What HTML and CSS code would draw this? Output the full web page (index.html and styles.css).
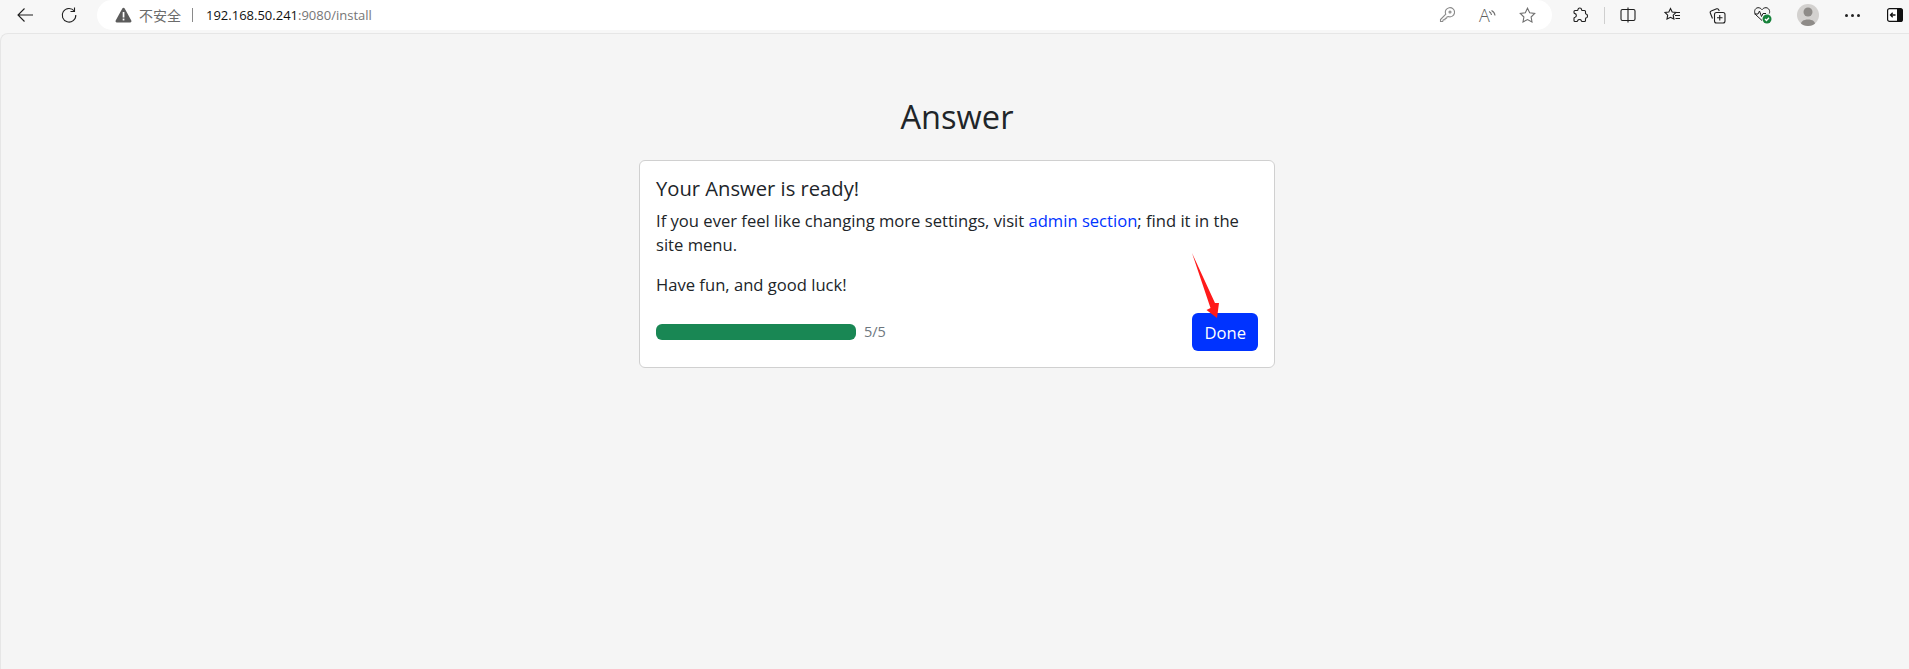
FILE: index.html
```html
<!DOCTYPE html>
<html lang="en">
<head>
    <meta charset="UTF-8">
    <meta name="viewport" content="width=device-width, initial-scale=1.0">
    <title>Answer</title>
    <link rel="stylesheet" href="styles.css">
</head>
<body>
    <div class="toolbar">
        <div class="nav-buttons">
            <span class="tool-btn">
                <svg class="icon" width="18" height="18" viewBox="0 0 18 18"><path d="M17 9H2M8.500 2.500 2 9l6.500 6.500"/></svg>
            </span>
            <span class="tool-btn">
                <svg class="icon" width="18" height="18" viewBox="0 0 18 18"><path d="M14.500 1.500V5.500H10.500M14.300 5A6.800 6.800 0 1 0 15.800 9"/></svg>
            </span>
        </div>

        <div class="address-bar">
            <svg class="warn-icon" width="17" height="16" viewBox="0 0 17 16"><path d="M8.500.8c.5 0 .9.3 1.200.8l6.600 12c.5.900-.1 1.800-1.100 1.800H1.800c-1 0-1.600-.9-1.100-1.800l6.600-12c.3-.5.700-.8 1.200-.8z"/><rect class="warn-mark" x="7.700" y="5" width="1.700" height="5.500"/><rect class="warn-mark" x="7.700" y="11.600" width="1.700" height="1.800"/></svg>
            <span class="not-secure">不安全</span>
            <span class="address-sep"></span>
            <span class="url"><span class="url-host">192.168.50.241</span>:9080/install</span>
            <div class="address-actions">
                <span class="address-btn">
                    <svg class="icon icon-light" width="16" height="16" viewBox="0 0 16 16"><path d="M1.500 14.500v-2l5.300-5.300a4.600 4.600 0 1 1 2.500 2.300l-1.300.4-.4 1.300H6.300l-.4 1.500H4.300l-.6 1.800z"/><circle cx="11" cy="5" r="1"/></svg>
                </span>
                <span class="address-btn">
                    <span class="read-a">A</span>
                    <svg class="icon icon-grey read-waves" width="8" height="10" viewBox="0 0 8 10"><path d="M1 1.500c1.500 .7 2.300 1.800 2.500 3.500M3.500 .5c2 1 3.300 2.600 3.500 5"/></svg>
                </span>
                <span class="address-btn">
                    <svg class="icon icon-grey" width="17" height="17" viewBox="0 0 17 17"><path d="M8.500 1.200l2.200 4.600 5 .7-3.600 3.500.9 5-4.500-2.400L4 15l.9-5L1.300 6.500l5-.7z"/></svg>
                </span>
            </div>
        </div>

        <div class="tool-group">
            <span class="tool-btn">
                <svg class="icon" width="16" height="16" viewBox="0 0 16 16"><path d="M6 2.500c0-2 3.500-2 3.500 0 0 .7 .5 1 1 1h2c.7 0 1 .4 1 1v1.800c0 .6 .4 .9 1 .9 1.300 .3 1.300 3.300 0 3.600-.6 0-1 .3-1 .9v1.800c0 .6-.3 1-1 1h-2.200c-.6 0-.9-.3-1-.9-.3-1.400-3.300-1.400-3.600 0-.1 .6-.4 .9-1 .9H3c-.6 0-1-.4-1-1v-2.300c0-.6 .4-1 1-1 1.800-.3 1.800-3.300 0-3.600-.6 0-1-.4-1-1V4.500c0-.6 .4-1 1-1h2c.6 0 1-.3 1-1z"/></svg>
            </span>
            <span class="tool-sep"></span>
            <span class="tool-btn">
                <svg class="icon" width="16" height="16" viewBox="0 0 16 16"><rect x="1" y="2.500" width="14" height="11" rx="1.500"/><path d="M8 .5v15"/></svg>
            </span>
            <span class="tool-btn tool-btn-wide">
                <svg class="icon" width="17" height="17" viewBox="0 0 17 17"><path d="M6.500 1.500 8.200 5l3.800.5-2.800 2.700.7 3.900-3.400-1.800L3 12.100l.7-3.900L1 5.500 4.800 5zM11 8.500h5M11 5.500h5M11.500 11.500H16"/></svg>
            </span>
            <span class="tool-btn tool-btn-wide">
                <svg class="icon" width="17" height="17" viewBox="0 0 17 17"><path d="M3.500 11.500 1.300 6a1.500 1.500 0 0 1 .9-2l5.500-2.200a1.500 1.500 0 0 1 1.800 .7l.8 1.500"/><rect x="5.500" y="5.500" width="10.500" height="10.500" rx="2"/><path d="M10.750 8v5.500M8 10.750h5.500"/></svg>
            </span>
            <span class="tool-btn tool-btn-wide">
                <svg class="health-icon" width="20" height="20" viewBox="0 0 20 20">
                    <path class="health-line" d="M9 15.500 3 10C.5 7.500 1.500 3 5 2.700c1.700-.1 3 .8 4 2 1-1.200 2.300-2.100 4-2 3 .2 4.300 3.300 3.300 5.800M1.500 9H5l1.500-3 2 5.500L10 8.500h3"/>
                    <circle class="health-badge" cx="14" cy="14" r="4.500"/>
                    <path class="health-check" d="M12 14l1.500 1.500 2.500-2.700"/>
                </svg>
            </span>
            <span class="tool-btn tool-btn-wide">
                <span class="avatar">
                    <svg width="22" height="22" viewBox="0 0 22 22"><circle cx="11" cy="8" r="4.500"/><path d="M3.500 22c0-4.500 3-6.500 7.500-6.500s7.500 2 7.500 6.500z"/></svg>
                </span>
            </span>
            <span class="tool-btn tool-btn-wide">
                <span class="dots"><i></i><i></i><i></i></span>
            </span>
            <span class="tool-btn tool-btn-last">
                <svg width="16" height="14" viewBox="0 0 16 14"><rect class="side-frame" x=".6" y=".6" width="14.800" height="12.800" rx="2"/><path class="side-fill" d="M10 .6h3.500a2 2 0 0 1 2 2v8.800a2 2 0 0 1-2 2H10z"/><path class="side-arrow" d="M8.500 7H3.500M5.700 4.800 3.500 7l2.200 2.200"/></svg>
            </span>
        </div>
    </div>

    <div class="panel">
        <h2 class="page-title">Answer</h2>
        <div class="card">
            <h5 class="card-title">Your Answer is ready!</h5>
            <p>If you ever feel like changing more settings, visit <a href="#">admin section</a>; find it in the site menu.</p>
            <p>Have fun, and good luck!</p>
            <div class="card-footer">
                <div class="progress-wrap">
                    <div class="progress"></div>
                    <span class="progress-text">5/5</span>
                </div>
                <button class="done-button">Done</button>
            </div>
            <!-- red arrow drawn on top of the screenshot -->
            <svg class="arrow" width="32" height="68" viewBox="0 0 32 68"><path d="M1 0 24 50 28 50 26 65 15.500 57 19.500 55z"/></svg>
        </div>
    </div>
</body>
</html>
```

FILE: styles.css
```css
html, body {
    height: 100%;
}
body {
    margin: 0;
    overflow: hidden;
    display: flex;
    flex-direction: column;
    background-color: #f7f7f7;
    color: #212529;
    font-family: "Open Sans", "Noto Sans", sans-serif;
}
.toolbar {
    display: flex;
    height: 30px;
    margin-bottom: 3px;
    flex-shrink: 0;
}
.nav-buttons {
    display: flex;
    padding-left: 3px;
    margin-right: 6px;
}
.tool-btn {
    width: 44px;
    display: flex;
    align-items: center;
    justify-content: center;
}
.tool-btn-wide {
    width: 45px;
}
.tool-btn-last {
    width: 40px;
    margin-right: -6px;
}
.icon {
    fill: none;
    stroke: #1f1f1f;
    stroke-width: 1.1;
}
.icon-grey {
    stroke: #6f6f6f;
}
.icon-light {
    stroke: #8a8a8a;
}
.address-bar {
    flex: 1;
    display: flex;
    align-items: center;
    padding-left: 18px;
    background-color: #fff;
    border-radius: 15px;
}
.warn-icon {
    fill: #5c5c5c;
    margin-right: 7px;
}
.warn-mark {
    fill: #fff;
}
.not-secure {
    font-family: "Noto Sans CJK SC", sans-serif;
    font-size: 14px;
    color: #6b6b6b;
}
.address-sep {
    width: 1px;
    height: 14px;
    margin: 0 13px 0 11px;
    background-color: #8a8a8a;
}
.url {
    font-size: 13px;
    color: #767676;
}
.url-host {
    color: #111;
}
.address-actions {
    margin-left: auto;
    display: flex;
    padding-right: 5px;
}
.address-btn {
    position: relative;
    width: 40px;
    display: flex;
    align-items: center;
    justify-content: center;
}
.read-a {
    font-size: 18px;
    font-weight: 300;
    color: #5f5f5f;
    margin-right: 5px;
}
.read-waves {
    position: absolute;
    right: 11px;
    top: 7px;
}
.tool-group {
    display: flex;
    padding-left: 6px;
}
.tool-sep {
    width: 1px;
    height: 17px;
    margin: 7px 1px 0 2px;
    background-color: #cfcfcf;
}
.health-line {
    fill: none;
    stroke: #1f1f1f;
    stroke-width: 1;
}
.health-badge {
    fill: #17823b;
}
.health-check {
    fill: none;
    stroke: #fff;
    stroke-width: 1.3;
}
.avatar {
    width: 22px;
    height: 22px;
    border-radius: 50%;
    overflow: hidden;
    background-color: #d3d1cf;
    fill: #8e8b88;
}
.avatar svg {
    display: block;
}
.dots {
    display: flex;
    gap: 3px;
}
.dots i {
    width: 3px;
    height: 3px;
    border-radius: 50%;
    background-color: #222;
}
.side-frame {
    fill: #fff;
    stroke: #111;
    stroke-width: 1.2;
}
.side-fill {
    fill: #111;
}
.side-arrow {
    fill: none;
    stroke: #111;
    stroke-width: 1.3;
}
.panel {
    flex: 1;
    padding: 64px 0 0 4px;
    background-color: #f5f5f5;
    border-top: 1px solid #e6e6e6;
    border-left: 1px solid #e6e6e6;
    border-top-left-radius: 8px;
}
.page-title {
    margin: 0 0 24px;
    font-size: 32.6px;
    font-weight: 400;
    line-height: 38px;
    text-align: center;
}
.card {
    position: relative;
    box-sizing: border-box;
    width: 636px;
    margin: 0 auto;
    padding: 16px;
    background-color: #fff;
    border: 1px solid #d0d0d0;
    border-radius: 6px;
    font-size: 16.6px;
    line-height: 24px;
}
.card-title {
    margin: 0 0 10px;
    font-size: 20.2px;
    font-weight: 400;
    line-height: 22px;
}
.card p {
    margin: 0 0 16px;
}
.card a {
    color: #0033ff;
    text-decoration: none;
}
.card-footer {
    display: flex;
    justify-content: space-between;
    align-items: center;
}
.progress-wrap {
    display: flex;
    align-items: center;
}
.progress {
    width: 200px;
    height: 16px;
    background-color: #198754;
    border-radius: 6px;
}
.progress-text {
    margin-left: 8px;
    font-size: 14.5px;
    color: #6c757d;
}
.done-button {
    height: 38px;
    padding: 0 12px;
    border: none;
    background-color: #0033ff;
    color: #fff;
    border-radius: 6px;
    font-family: inherit;
    font-size: 16.6px;
}
.arrow {
    position: absolute;
    left: 551px;
    top: 92px;
    fill: #ff1a1a;
}
```
